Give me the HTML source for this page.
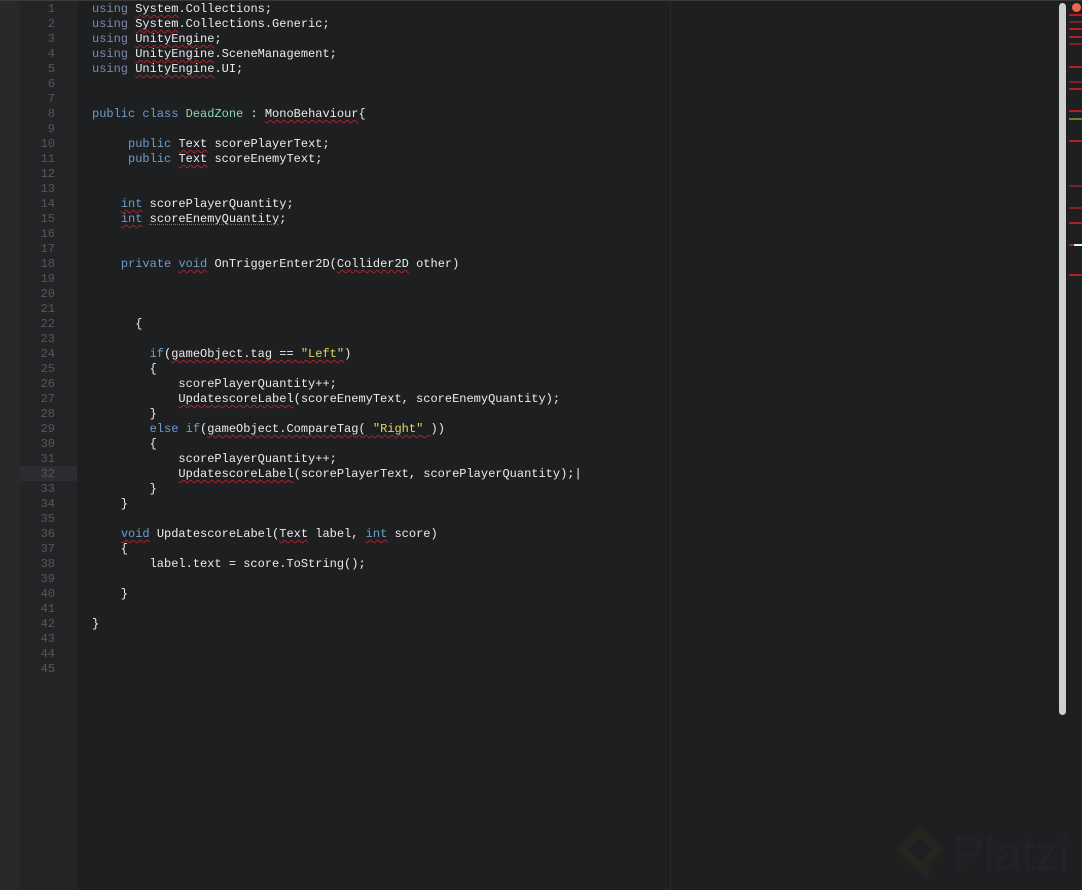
<!DOCTYPE html>
<html><head><meta charset="utf-8"><style>
html,body{margin:0;padding:0;width:1082px;height:890px;overflow:hidden;background:#1e1f21;}
#strip{position:absolute;left:0;top:0;width:20px;height:890px;background:#29292a;}
#gut{position:absolute;left:20px;top:0;width:57px;height:890px;background:#232426;}
#hl{position:absolute;left:20px;top:466px;width:57px;height:15px;background:#2c2d30;}
#topb{position:absolute;left:0;top:0;width:1082px;height:1px;background:#3a3a3a;}
#ruler{position:absolute;left:670px;top:0;width:1px;height:890px;background:#2a2b2d;}
pre{margin:0;position:absolute;top:2px;font:12px/15px "Liberation Mono",monospace;}
#nums{left:20px;width:35px;text-align:right;color:#55575a;}
#code{left:92px;color:#ececec;}
.k{color:#6f9ccc}.u{color:#7a8ea6}.t{color:#8fd6b4}.s{color:#e6d56a}
.q{text-decoration:underline wavy #a8222a;text-decoration-thickness:1px;text-underline-offset:2px}
.g{text-decoration:underline dotted #6b8a2a;text-underline-offset:2px}
#sb{position:absolute;left:1059px;top:3px;width:7px;height:712px;background:#cfcfcf;border-radius:4px;}
#dot{position:absolute;left:1072px;top:3px;width:9px;height:9px;border-radius:50%;background:#f06550;}
.m{position:absolute;left:1069px;width:13px;height:2px;background:#b01e1e;}
#logo{position:absolute;left:892px;top:818px;font:48px "Liberation Sans",sans-serif;color:#212326;}
</style></head><body>
<div id="strip"></div><div id="gut"></div><div id="hl"></div><div id="topb"></div><div id="ruler"></div>
<pre id="nums">1
2
3
4
5
6
7
8
9
10
11
12
13
14
15
16
17
18
19
20
21
22
23
24
25
26
27
28
29
30
31
32
33
34
35
36
37
38
39
40
41
42
43
44
45</pre>
<pre id="code"><span class="u">using</span> <span class="q">System</span>.Collections;
<span class="u">using</span> <span class="q">System</span>.Collections.Generic;
<span class="u">using</span> <span class="q">UnityEngine</span>;
<span class="u">using</span> <span class="q">UnityEngine</span>.SceneManagement;
<span class="u">using</span> <span class="q">UnityEngine</span>.UI;


<span class="k">public</span> <span class="k">class</span> <span class="t">DeadZone</span> : <span class="q">MonoBehaviour</span>{

     <span class="k">public</span> <span class="q">Text</span> scorePlayerText;
     <span class="k">public</span> <span class="q">Text</span> scoreEnemyText;


    <span class="k q">int</span> scorePlayerQuantity;
    <span class="k q">int</span> <span class="g">scoreEnemyQuantity</span>;


    <span class="k">private</span> <span class="k q">void</span> OnTriggerEnter2D(<span class="q">Collider2D</span> other)



      {

        <span class="k">if</span>(<span class="q">gameObject.tag == <span class="s">"Left"</span></span>)
        {
            scorePlayerQuantity++;
            <span class="q">UpdatescoreLabel</span>(scoreEnemyText, scoreEnemyQuantity);
        }
        <span class="k">else</span> <span class="k">if</span>(<span class="q">gameObject.CompareTag( <span class="s">"Right"</span> </span>))
        {
            scorePlayerQuantity++;
            <span class="q">UpdatescoreLabel</span>(scorePlayerText, scorePlayerQuantity);|
        }
    }

    <span class="k q">void</span> UpdatescoreLabel(<span class="q">Text</span> label, <span class="k q">int</span> score)
    {
        label.text = score.ToString();

    }

}</pre>
<div id="sb"></div><div id="dot"></div>
<div class="m" style="top:14px"></div><div class="m" style="top:21px;background:#7a2424"></div><div class="m" style="top:28px"></div><div class="m" style="top:36px"></div><div class="m" style="top:43px;background:#7a2424"></div><div class="m" style="top:66px"></div><div class="m" style="top:81px;background:#7a2424"></div><div class="m" style="top:88px"></div><div class="m" style="top:110px"></div><div class="m" style="top:118px;background:#5c8a20"></div><div class="m" style="top:140px"></div><div class="m" style="top:185px;background:#7a2424"></div><div class="m" style="top:207px;background:#7a2424"></div><div class="m" style="top:222px"></div><div class="m" style="top:244px"></div><div style="position:absolute;left:1074px;top:244px;width:8px;height:2px;background:#eee"></div><div class="m" style="top:274px"></div>
<div id="logo"><svg width="54" height="62" viewBox="0 0 54 62" style="vertical-align:-10px;margin-right:6px"><path d="M34 54 L10 31 L28 13 L46 31 L34 43" fill="none" stroke="#23251f" stroke-width="9" stroke-linejoin="round" stroke-linecap="round"/></svg>Platzi</div>
</body></html>
